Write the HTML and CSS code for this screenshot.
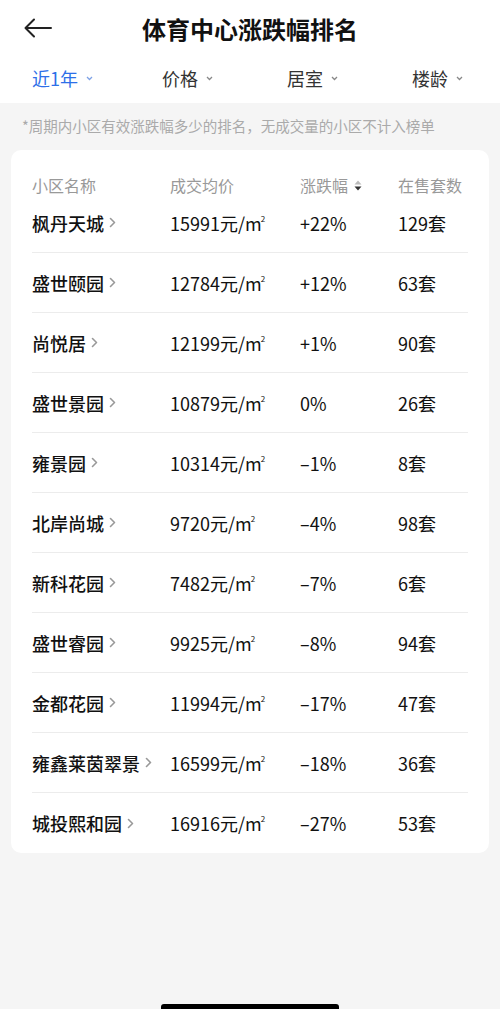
FILE: index.html
```html
<!DOCTYPE html>
<html lang="zh-CN">
<head>
    <meta charset="UTF-8">
    <meta name="viewport" content="width=device-width, initial-scale=1.0">
    <title>体育中心涨跌幅排名</title>
    <link rel="stylesheet" href="styles.css">
</head>
<body>
    <div class="top">
        <div class="nav">
            <svg class="back" width="28" height="20" viewBox="0 0 28 20">
                <path d="M27 10H2M10 1.5L1.5 10L10 18.5" fill="none" stroke="#222" stroke-width="2" stroke-linecap="round" stroke-linejoin="round"/>
            </svg>
            <h1>体育中心涨跌幅排名</h1>
        </div>
        <div class="tabs">
            <div class="tab active">近1年<svg width="7" height="5" viewBox="0 0 7 5"><path d="M1 1l2.5 2.5L6 1" fill="none" stroke="currentColor" stroke-width="1.3"/></svg></div>
            <div class="tab">价格<svg width="7" height="5" viewBox="0 0 7 5"><path d="M1 1l2.5 2.5L6 1" fill="none" stroke="currentColor" stroke-width="1.3"/></svg></div>
            <div class="tab">居室<svg width="7" height="5" viewBox="0 0 7 5"><path d="M1 1l2.5 2.5L6 1" fill="none" stroke="currentColor" stroke-width="1.3"/></svg></div>
            <div class="tab">楼龄<svg width="7" height="5" viewBox="0 0 7 5"><path d="M1 1l2.5 2.5L6 1" fill="none" stroke="currentColor" stroke-width="1.3"/></svg></div>
        </div>
    </div>

    <p class="note">*周期内小区有效涨跌幅多少的排名，无成交量的小区不计入榜单</p>

    <div class="card">
        <div class="row head">
            <span>小区名称</span>
            <span>成交均价</span>
            <span>涨跌幅<svg class="sort" width="8" height="11" viewBox="0 0 8 11"><path d="M4 0.5L7.5 4.5H0.5Z" fill="#bbb"/><path d="M4 10.5L7.5 6.5H0.5Z" fill="#333"/></svg></span>
            <span>在售套数</span>
        </div>
        <div id="rows"></div>
    </div>

    <div class="home-bar"></div>

    <script>
        const data = [
            ['枫丹天城', '15991', '+22%', '129套'],
            ['盛世颐园', '12784', '+12%', '63套'],
            ['尚悦居', '12199', '+1%', '90套'],
            ['盛世景园', '10879', '0%', '26套'],
            ['雍景园', '10314', '–1%', '8套'],
            ['北岸尚城', '9720', '–4%', '98套'],
            ['新科花园', '7482', '–7%', '6套'],
            ['盛世睿园', '9925', '–8%', '94套'],
            ['金都花园', '11994', '–17%', '47套'],
            ['雍鑫莱茵翠景', '16599', '–18%', '36套'],
            ['城投熙和园', '16916', '–27%', '53套']
        ];
        const chevron = '<svg class="more" width="7" height="11" viewBox="0 0 7 11"><path d="M1.5 1.5L5.5 5.5L1.5 9.5" fill="none" stroke="#999" stroke-width="1.6" stroke-linecap="round" stroke-linejoin="round"/></svg>';
        let html = '';
        data.forEach(function (d) {
            html += '<div class="row">' +
                '<span class="name">' + d[0] + chevron + '</span>' +
                '<span>' + d[1] + '元/m<sup>2</sup></span>' +
                '<span>' + d[2] + '</span>' +
                '<span>' + d[3] + '</span>' +
                '</div>';
        });
        document.getElementById('rows').innerHTML = html;
    </script>
</body>
</html>
```

FILE: styles.css
```css
body {
    margin: 0;
    height: 1009px;
    background: #f5f5f5;
    font-family: "Noto Sans CJK SC", "Noto Sans", sans-serif;
    color: #111;
    position: relative;
    overflow: hidden;
}
.top {
    background: #fff;
    height: 103px;
}
.nav {
    height: 56px;
    display: flex;
    align-items: center;
    justify-content: center;
    position: relative;
}
.back {
    position: absolute;
    left: 24px;
    top: 18px;
}
.nav h1 {
    margin: 0;
    font-size: 24px;
    font-weight: 700;
    color: #111;
}
.tabs {
    display: grid;
    grid-template-columns: repeat(4, 1fr);
    height: 44px;
    align-items: center;
}
.tab {
    display: flex;
    align-items: center;
    justify-content: center;
    gap: 8px;
    font-size: 18px;
    color: #333;
    line-height: 20px;
}
.tab svg {
    color: #888;
}
.tab.active {
    color: #2d6fe8;
}
.tab.active svg {
    color: #7ea2e6;
}
.note {
    margin: 0;
    padding: 14px 0 0 22px;
    height: 33px;
    font-size: 14.5px;
    line-height: 18px;
    color: #aaa;
    white-space: nowrap;
}
.card {
    margin: 0 11px;
    background: #fff;
    border-radius: 10px;
    padding: 27px 21px 0;
}
.row {
    display: grid;
    grid-template-columns: 138px 130px 98px 1fr;
    align-items: center;
    height: 60px;
    border-bottom: 1px solid #ececec;
    font-size: 18px;
    box-sizing: border-box;
    white-space: nowrap;
}
.row:last-child {
    border-bottom: none;
}
.row.head {
    height: 16px;
    border-bottom: none;
    font-size: 16px;
    color: #999;
    line-height: 16px;
}
.row.head span {
    display: flex;
    align-items: center;
    gap: 6px;
}
.name {
    font-weight: 500;
    display: flex;
    align-items: center;
    gap: 5px;
}
sup {
    font-size: 8px;
    vertical-align: 9px;
    line-height: 0;
    margin-left: -1px;
}
.home-bar {
    position: absolute;
    left: 161px;
    bottom: 0;
    width: 178px;
    height: 5px;
    border-radius: 3px 3px 0 0;
    background: #000;
}
```
